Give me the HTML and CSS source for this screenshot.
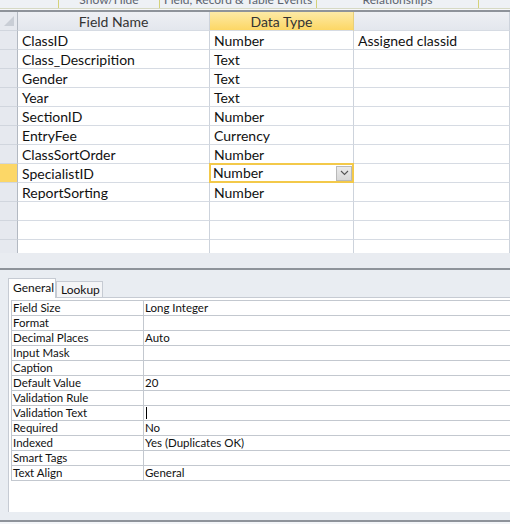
FILE: index.html
```html
<!DOCTYPE html>
<html>
<head>
<meta charset="utf-8">
<link rel="stylesheet" href="styles.css">
</head>
<body>
<div class="ribbon">
  <div class="rgroup g1"><span>Show/Hide</span></div>
  <div class="rgroup g2"><span>Field, Record &amp; Table Events</span></div>
  <div class="rgroup g3"><span>Relationships</span></div>
  <div class="rgroup g4"></div>
</div>
<div class="ribbon-gap"></div>
<div class="ribbon-rule"></div>

<div class="design">
  <div class="grid">
    <div class="hcell sel corner"><svg width="12" height="12" viewBox="0 0 12 12"><polygon points="11,1 11,11 1,11" fill="#c9ced6"/></svg></div>
    <div class="hcell">Field Name</div>
    <div class="hcell active">Data Type</div>
    <div class="hcell"></div>

    <div class="sel"></div><div class="cell">ClassID</div><div class="cell">Number</div><div class="cell">Assigned classid</div>
    <div class="sel"></div><div class="cell">Class_Descripition</div><div class="cell">Text</div><div class="cell"></div>
    <div class="sel"></div><div class="cell">Gender</div><div class="cell">Text</div><div class="cell"></div>
    <div class="sel"></div><div class="cell">Year</div><div class="cell">Text</div><div class="cell"></div>
    <div class="sel"></div><div class="cell">SectionID</div><div class="cell">Number</div><div class="cell"></div>
    <div class="sel"></div><div class="cell">EntryFee</div><div class="cell">Currency</div><div class="cell"></div>
    <div class="sel"></div><div class="cell">ClassSortOrder</div><div class="cell">Number</div><div class="cell"></div>
    <div class="sel current"></div><div class="cell">SpecialistID</div><div class="cell combo"><span class="ctext">Number</span><span class="dd"><svg width="9" height="6" viewBox="0 0 9 6"><polyline points="1,1 4.5,4.5 8,1" fill="none" stroke="#555" stroke-width="1.1"/></svg></span></div><div class="cell"></div>
    <div class="sel"></div><div class="cell">ReportSorting</div><div class="cell">Number</div><div class="cell"></div>
    <div class="sel"></div><div class="cell"></div><div class="cell"></div><div class="cell"></div>
    <div class="sel"></div><div class="cell"></div><div class="cell"></div><div class="cell"></div>
    <div class="sel"></div><div class="cell"></div><div class="cell"></div><div class="cell"></div>
  </div>
  <div class="grid-foot"></div>
</div>
<div class="split-rule"></div>

<div class="props">
  <div class="tabs">
    <div class="tab on">General</div>
    <div class="tab">Lookup</div>
  </div>
  <div class="panel">
    <div class="pgrid">
      <div class="pl">Field Size</div><div class="pv">Long Integer</div>
      <div class="pl">Format</div><div class="pv"></div>
      <div class="pl">Decimal Places</div><div class="pv">Auto</div>
      <div class="pl">Input Mask</div><div class="pv"></div>
      <div class="pl">Caption</div><div class="pv"></div>
      <div class="pl">Default Value</div><div class="pv">20</div>
      <div class="pl">Validation Rule</div><div class="pv"></div>
      <div class="pl">Validation Text</div><div class="pv"><span class="caret"></span></div>
      <div class="pl">Required</div><div class="pv">No</div>
      <div class="pl">Indexed</div><div class="pv">Yes (Duplicates OK)</div>
      <div class="pl">Smart Tags</div><div class="pv"></div>
      <div class="pl">Text Align</div><div class="pv">General</div>
    </div>
  </div>
  <div class="props-foot"></div>
</div>
<div class="bottom-rule"></div>
</body>
</html>
```
FILE: styles.css
```css
html, body {
  margin: 0;
  padding: 0;
}
body {
  width: 510px;
  height: 524px;
  overflow: hidden;
  background: #f3f5f8;
  font-family: Lato, "Liberation Sans", sans-serif;
  color: #111;
}

/* ribbon remnants */
.ribbon {
  height: 8px;
  display: flex;
  background: #eef1f5;
  border-bottom: 1px solid #d6d9c4;
  overflow: hidden;
}
.rgroup {
  height: 8px;
  border-left: 1px solid #d4d27a;
  display: flex;
  justify-content: center;
  overflow: hidden;
}
.rgroup span {
  font-size: 12px;
  color: #5c6470;
  line-height: 12px;
  margin-top: -6px;
  white-space: nowrap;
}
.g1 { margin-left: 58px; width: 100px; }
.g2 { width: 156px; }
.g3 { width: 161px; }
.g4 { flex: 1; }

.ribbon-gap { height: 1px; background: #f6f7f9; }
.ribbon-rule { height: 2px; background: #8e939a; }

/* design grid */
.design {
  height: 256px;
  background: #e9ecf1;
  overflow: hidden;
}
.grid {
  display: grid;
  grid-template-columns: 18px 192px 144px 1fr;
  grid-auto-rows: 19px;
  height: 241px;
  overflow: hidden;
  background: #fff;
}
.grid > div {
  box-sizing: border-box;
  border-right: 1px solid #cdd3dc;
  border-bottom: 1px solid #d6dbe3;
  font-size: 14px;
  line-height: 18px;
  padding-top: 1px;
  white-space: nowrap;
  overflow: hidden;
}
.hcell {
  background: linear-gradient(#eef0f4, #e3e7ed);
  color: #333;
  text-align: center;
  border-bottom: 1px solid #d6dbe3;
}
.hcell.active {
  background: linear-gradient(#fdeaa6, #fcd765);
  border-right-color: #e7cf7a;
}
.grid > .corner {
  display: flex;
  align-items: flex-end;
  justify-content: flex-end;
  padding: 0 2px 3px 0;
}
.corner svg { display: block; }
.sel {
  background: #e6e9ef;
  border-right: 1px solid #b3b9c2 !important;
  border-bottom: 1px solid #d1d6de !important;
}
.sel.current {
  background: #fcd767;
}
.cell {
  padding-left: 4px;
  color: #111;
}
.grid > .combo {
  display: flex;
  align-items: center;
  justify-content: space-between;
  border: 2px solid #f3c94a;
  padding: 0 0 0 2px;
  margin-left: -1px;
  margin-top: -1px;
  height: 20px;
  width: 145px;
  line-height: 16px;
}
.dd {
  width: 16px;
  height: 15px;
  background: linear-gradient(#eaeaea, #d8d8d8);
  border: 1px solid #b9b9b9;
  box-sizing: border-box;
  display: flex;
  align-items: center;
  justify-content: center;
}
.dd svg { display: block; }
.grid-foot { height: 15px; }
.split-rule { height: 2px; background: #8e939a; }

/* property sheet */
.props {
  height: 250px;
  background: #e9edf2;
  padding-top: 8px;
  box-sizing: border-box;
  display: flex;
  flex-direction: column;
}
.tabs {
  display: flex;
  align-items: flex-end;
  padding-left: 8px;
  height: 19px;
}
.tab {
  font-size: 12px;
  line-height: 15px;
  padding: 0 2px 0 4px;
  height: 16px;
  box-sizing: border-box;
  background: #f4f5f7;
  border: 1px solid #c6cbd3;
  border-bottom: none;
  color: #111;
}
.tab.on {
  height: 20px;
  line-height: 17px;
  padding: 0 3px 0 4px;
  background: #fff;
  position: relative;
  top: 1px;
  width: 48px;
}
.panel {
  flex: 1;
  margin-left: 8px;
  background: #fff;
  border-left: 1px solid #c6cbd3;
  border-top: 1px solid #c6cbd3;
  padding: 2px 0 0 2px;
}
.pgrid {
  display: grid;
  grid-template-columns: 132px 1fr;
  grid-auto-rows: 15px;
  border-top: 1px solid #c3c8cf;
  border-left: 1px solid #c3c8cf;
}
.pgrid > div {
  box-sizing: border-box;
  border-bottom: 1px solid #c3c8cf;
  font-size: 11.5px;
  line-height: 14px;
  padding-left: 1px;
  white-space: nowrap;
  overflow: hidden;
  color: #111;
}
.pl { border-right: 1px solid #c3c8cf; }
.caret {
  display: inline-block;
  width: 1px;
  height: 12px;
  background: #000;
  vertical-align: -2px;
  margin-left: 1px;
}
.props-foot { height: 8px; }
.bottom-rule { height: 2px; background: #8e939a; }
```
